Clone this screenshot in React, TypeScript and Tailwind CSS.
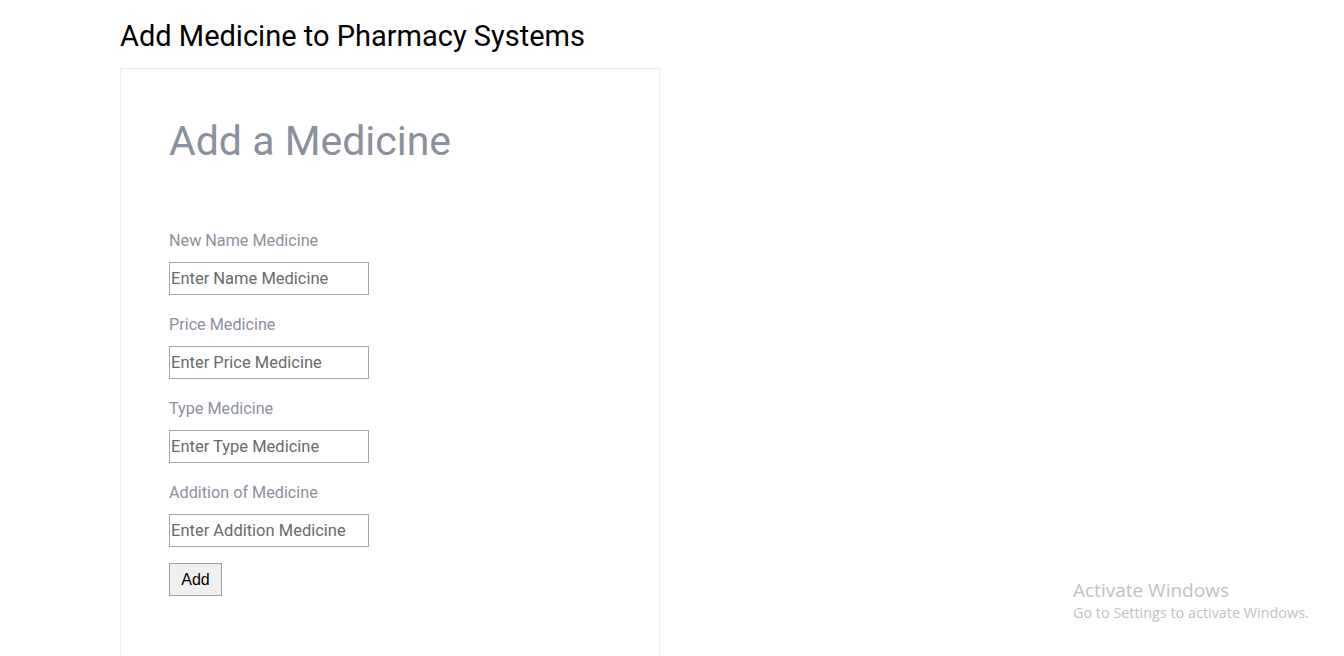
import React from "react";

const fields = [
  { label: "New Name Medicine", placeholder: "Enter Name Medicine" },
  { label: "Price Medicine", placeholder: "Enter Price Medicine" },
  { label: "Type Medicine", placeholder: "Enter Type Medicine" },
  { label: "Addition of Medicine", placeholder: "Enter Addition Medicine" },
];

export default function App() {
  return (
    <div className="relative h-[656px] overflow-hidden bg-white font-['Roboto',sans-serif]">
      <div className="pl-[120px] pt-[18px]">
        {/* Page title */}
        <h1 className="text-[29px] leading-[36px] text-black mb-[14px]">
          Add Medicine to Pharmacy Systems
        </h1>

        {/* Form card */}
        <div className="w-[540px] h-[600px] border border-[#ececec] border-b-0 pl-[48px] pt-[48px]">
          <h2 className="text-[41px] leading-[48px] text-[#8b909d] mb-[64px]">
            Add a Medicine
          </h2>

          <form className="flex flex-col">
            {fields.map((f) => (
              <div key={f.label} className="flex flex-col mb-[18px]">
                <label className="text-[16.2px] leading-[24px] text-[#8b909d] mb-[9px]">
                  {f.label}
                </label>
                <input
                  type="text"
                  placeholder={f.placeholder}
                  className="w-[200px] h-[33px] border border-[#a6a6a6] px-[1px] text-[16.5px] text-[#5f5f5f] placeholder:text-[#6a6a6a] outline-none font-['Roboto',sans-serif]"
                />
              </div>
            ))}
            <div>
              <button
                type="button"
                className="w-[53px] h-[33px] border border-[#a0a0a0] bg-[#efefef] text-[16px] text-black font-['Liberation_Sans',Arial,sans-serif] -mt-[2px]"
              >
                Add
              </button>
            </div>
          </form>
        </div>
      </div>

      {/* Windows activation watermark */}
      <div className="absolute left-[1073px] top-[577px] text-[#c2c2c2] font-['Open_Sans',sans-serif]">
        <div className="text-[19px] leading-[26px]">Activate Windows</div>
        <div className="text-[14.4px] leading-[20px]">Go to Settings to activate Windows.</div>
      </div>
    </div>
  );
}
